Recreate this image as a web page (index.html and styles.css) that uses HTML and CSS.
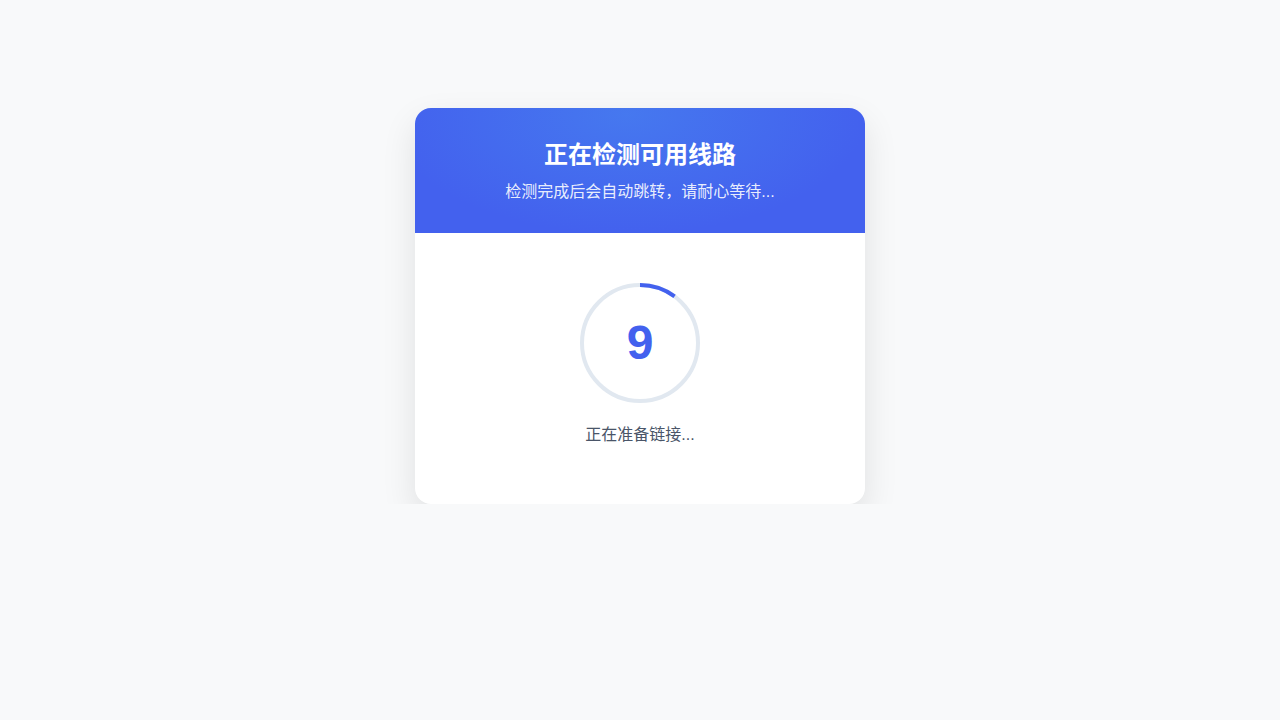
FILE: index.html
```html
<!DOCTYPE html>
<html lang="zh">
<head>
<meta charset="utf-8">
<title>正在检测可用线路</title>
<link rel="stylesheet" href="styles.css">
</head>
<body>
<div class="page">
  <div class="card">
    <div class="card-header">
      <h1 class="title">正在检测可用线路</h1>
      <p class="subtitle">检测完成后会自动跳转，请耐心等待...</p>
    </div>
    <div class="card-body">
      <div class="ring">
        <svg class="ring-svg" width="120" height="120" viewBox="0 0 120 120">
          <circle cx="60" cy="60" r="58" fill="none" stroke="#e1e8f0" stroke-width="4"/>
          <circle cx="60" cy="60" r="58" fill="none" stroke="#4361ee" stroke-width="4" stroke-dasharray="37 400" transform="rotate(-90 60 60)"/>
        </svg>
        <span class="count">9</span>
      </div>
      <p class="status">正在准备链接...</p>
    </div>
  </div>
</div>
</body>
</html>
```

FILE: styles.css
```css
html, body {
  margin: 0;
  padding: 0;
  background: #f8f9fa;
  font-family: "Liberation Sans", Arial, "Noto Sans CJK SC", sans-serif;
}
.page {
  display: flex;
  justify-content: center;
  padding-top: 108px;
}
.card {
  width: 450px;
  background: #ffffff;
  border-radius: 16px;
  overflow: hidden;
  box-shadow: 0 14px 34px rgba(0, 0, 0, 0.1);
}
.card-header {
  height: 125px;
  box-sizing: border-box;
  padding-top: 31px;
  text-align: center;
  color: #ffffff;
  background:
    radial-gradient(ellipse 240px 120px at 47% 5%, rgba(70, 124, 239, 0.85), rgba(67, 97, 238, 0) 100%),
    #4361ee;
}
.title {
  margin: 0;
  font-size: 24px;
  line-height: 32px;
  font-weight: 700;
}
.subtitle {
  margin: 9px 0 0;
  font-size: 16px;
  line-height: 24px;
  color: rgba(255, 255, 255, 0.9);
}
.card-body {
  display: flex;
  flex-direction: column;
  align-items: center;
  padding: 50px 40px 57px;
}
.ring {
  position: relative;
  width: 120px;
  height: 120px;
  display: flex;
  align-items: center;
  justify-content: center;
}
.ring-svg {
  position: absolute;
  left: 0;
  top: 0;
}
.count {
  position: relative;
  font-size: 48px;
  font-weight: 700;
  color: #4361ee;
  line-height: 1;
}
.status {
  margin: 20px 0 0;
  font-size: 16px;
  line-height: 24px;
  color: #4a5568;
}
```
